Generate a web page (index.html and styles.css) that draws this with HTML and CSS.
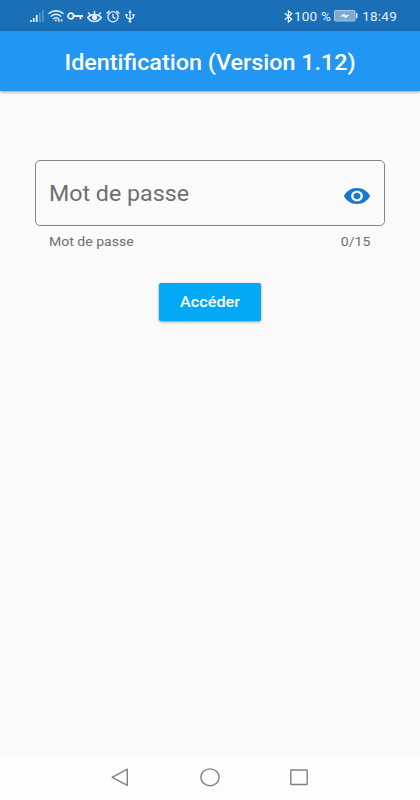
FILE: index.html
```html
<!DOCTYPE html>
<html lang="fr">
<head>
    <meta charset="UTF-8">
    <meta name="viewport" content="width=device-width, initial-scale=1.0">
    <title>Identification</title>
    <link rel="stylesheet" href="styles.css">
</head>
<body>
    <div class="status-bar">
        <div class="status-icons">
            <svg width="14" height="12" viewBox="0 0 14 12">
                <path d="M0 10h1.7v2H0zM2.9 8h1.7v4H2.9zM5.8 5h1.8v7H5.8z" fill="#e4eff8"/>
                <path d="M9 2.5h1.7V12H9zM12 0h1.7v12H12z" fill="#5795cb"/>
            </svg>
            <svg class="wifi" width="16" height="12" viewBox="0 0 16 12" fill="none" stroke="#e4eff8" stroke-width="1.5">
                <path d="M.5 3.8C5-.3 11-.3 15.5 3.8M2.8 6.5c3.2-2.8 7.2-2.8 10.4 0M5 9c1.8-1.6 4.2-1.6 6 0"/>
                <path d="M6.3 9.8h3L7.8 11.8z" fill="#e4eff8" stroke="none"/>
                <path d="M10.8 9.2v2.4M13.5 9.2v2.4" stroke-width="1.7"/>
            </svg>
            <svg class="key" width="17" height="8" viewBox="0 0 17 8" fill="none" stroke="#e4eff8" stroke-width="1.8">
                <circle cx="3.8" cy="4" r="2.8"/>
                <path d="M6.6 4H16M13.5 4v3.2"/>
            </svg>
            <svg class="care" width="15" height="13" viewBox="0 0 15 13" fill="none" stroke="#e4eff8" stroke-width="1.4">
                <path d="M.7 7.5C4.2 3.4 10.8 3.4 14.3 7.5C10.8 12.8 4.2 12.8 .7 7.5z"/>
                <circle cx="7.5" cy="7.5" r="1.9" fill="#e4eff8"/>
                <path d="M7.5 4V.8M3.2 4.8L1.2 2.4M11.8 4.8L13.8 2.4"/>
            </svg>
            <svg class="alarm" width="14" height="13" viewBox="0 0 14 13" fill="none" stroke="#e4eff8" stroke-width="1.3">
                <circle cx="7" cy="6.8" r="5.1"/>
                <path d="M7 3.8v3.3l2.4 1.5M.6 3.5L3.5.8M13.4 3.5L10.5.8"/>
            </svg>
            <svg class="usb" width="10" height="13" viewBox="0 0 10 13" fill="none" stroke="#e4eff8" stroke-width="1.2">
                <path d="M5 2v9M1.5 5v2.2L5 9.5M8.5 4.5v2.7L5 9.5"/>
                <path d="M5 0l1.8 2.8H3.2zM.4 4h2.2v1.8H.4zM7.4 4h2.2v1.8H7.4z" fill="#e4eff8" stroke="none"/>
                <circle cx="5" cy="11.4" r="1.3" fill="#e4eff8" stroke="none"/>
            </svg>
        </div>
        <div class="status-info">
            <svg width="9" height="13" viewBox="0 0 9 13" fill="none" stroke="#e4eff8" stroke-width="1.3">
                <path d="M.7 3.3l7 6L4.4 12V1l3.3 2.7-7 6"/>
            </svg>
            <span class="percent">100 %</span>
            <svg class="battery" width="24" height="12" viewBox="0 0 24 12">
                <rect x=".5" y=".5" width="20.5" height="10.5" rx="1" fill="#78abd5" stroke="#a9c9e4"/>
                <path d="M22 3.2h1.5v5H22z" fill="#e4eff8"/>
                <path d="M5.7 6.4l4.8-2.9v1.7h5.1l-4.8 3V6.4z" fill="#fff"/>
            </svg>
            <span class="time">18:49</span>
        </div>
    </div>

    <header class="app-bar">
        <h1>Identification (Version 1.12)</h1>
    </header>

    <main class="content">
        <div class="field">
            <span class="label">Mot de passe</span>
            <svg class="eye" width="26" height="16" viewBox="1 4.5 22 15" preserveAspectRatio="none">
                <path fill="#1976d2" d="M12 4.5C7 4.5 2.73 7.61 1 12c1.73 4.39 6 7.5 11 7.5s9.27-3.11 11-7.5c-1.73-4.39-6-7.5-11-7.5zM12 17c-2.76 0-5-2.24-5-5s2.24-5 5-5 5 2.24 5 5-2.24 5-5 5zm0-8c-1.66 0-3 1.34-3 3s1.34 3 3 3 3-1.34 3-3-1.34-3-3-3z"/>
            </svg>
        </div>
        <div class="helper">
            <span class="hint">Mot de passe</span>
            <span class="counter">0/15</span>
        </div>
        <button class="submit"><span>Accéder</span></button>
    </main>

    <nav class="nav-bar">
        <svg width="18" height="19" viewBox="0 0 18 19"><path d="M1.2 9.3L16.3 1.2v16.2z"/></svg>
        <svg width="20" height="19" viewBox="0 0 20 19"><ellipse cx="10" cy="9.3" rx="9.1" ry="8.4"/></svg>
        <svg width="18" height="19" viewBox="0 0 18 19"><rect x=".8" y="2" width="16.4" height="14.5" rx=".5"/></svg>
    </nav>
</body>
</html>
```

FILE: styles.css
```css
* {
    box-sizing: border-box;
}

body {
    margin: 0;
    height: 100vh;
    display: flex;
    flex-direction: column;
    background-color: #fafafa;
    font-family: Roboto, sans-serif;
    overflow: hidden;
}

svg {
    display: block;
    flex: none;
}

span {
    white-space: nowrap;
}

.status-bar {
    height: 31px;
    padding: 1px 23px 0 30px;
    display: flex;
    justify-content: space-between;
    align-items: center;
    background-color: #1a6fb7;
    color: #e4eff8;
    font-size: 13.5px;
}

.status-icons,
.status-info {
    display: flex;
    align-items: center;
}

.wifi {
    margin-left: 4px;
}

.key {
    margin-left: 3px;
}

.care {
    margin-left: 3px;
}

.alarm {
    margin-left: 4px;
}

.usb {
    margin-left: 5px;
}

.percent {
    margin-left: 1px;
    letter-spacing: 0.25px;
}

.battery {
    margin-left: 3px;
}

.time {
    margin-left: 4px;
    letter-spacing: 0.25px;
}

.app-bar {
    height: 60px;
    padding-top: 2px;
    display: flex;
    justify-content: center;
    align-items: center;
    background-color: #2196f3;
    color: #fff;
    box-shadow: 0 1px 3px rgba(0, 0, 0, 0.4);
}

.app-bar h1 {
    margin: 0;
    font-size: 21.5px;
    font-weight: 500;
    white-space: nowrap;
    transform: scaleX(1.085);
}

.content {
    flex: 1;
    padding: 69px 35px 0;
    display: flex;
    flex-direction: column;
}

.field {
    height: 66px;
    padding: 1px 14px 0 13px;
    display: flex;
    justify-content: space-between;
    align-items: center;
    border: 1px solid #858585;
    border-radius: 5px;
}

.eye {
    margin-top: 4px;
}

.label {
    color: #6f6f6f;
    font-size: 21.5px;
    transform: scaleX(1.08);
    transform-origin: left;
}

.helper {
    padding: 8px 15px 0 14px;
    display: flex;
    justify-content: space-between;
    color: #6f6f6f;
    font-size: 13px;
    line-height: 16px;
}

.hint {
    transform: scaleX(1.08);
    transform-origin: left;
}

.counter {
    transform: scaleX(1.08);
    transform-origin: right;
}

.submit {
    align-self: center;
    width: 102px;
    height: 38px;
    margin-top: 33px;
    padding: 0;
    border: none;
    border-radius: 2px;
    background-color: #03a9f4;
    color: #fff;
    font-family: inherit;
    font-size: 15px;
    font-weight: 500;
    box-shadow: 0 1px 3px rgba(0, 0, 0, 0.4);
}

.submit span {
    display: block;
    transform: scaleX(1.08);
}

.nav-bar {
    height: 44px;
    padding: 0 112px 2px 111px;
    display: flex;
    justify-content: space-between;
    align-items: center;
    background-color: #fdfdfd;
}

.nav-bar svg {
    fill: none;
    stroke: #808080;
    stroke-width: 1.4;
    stroke-linejoin: round;
}
```
